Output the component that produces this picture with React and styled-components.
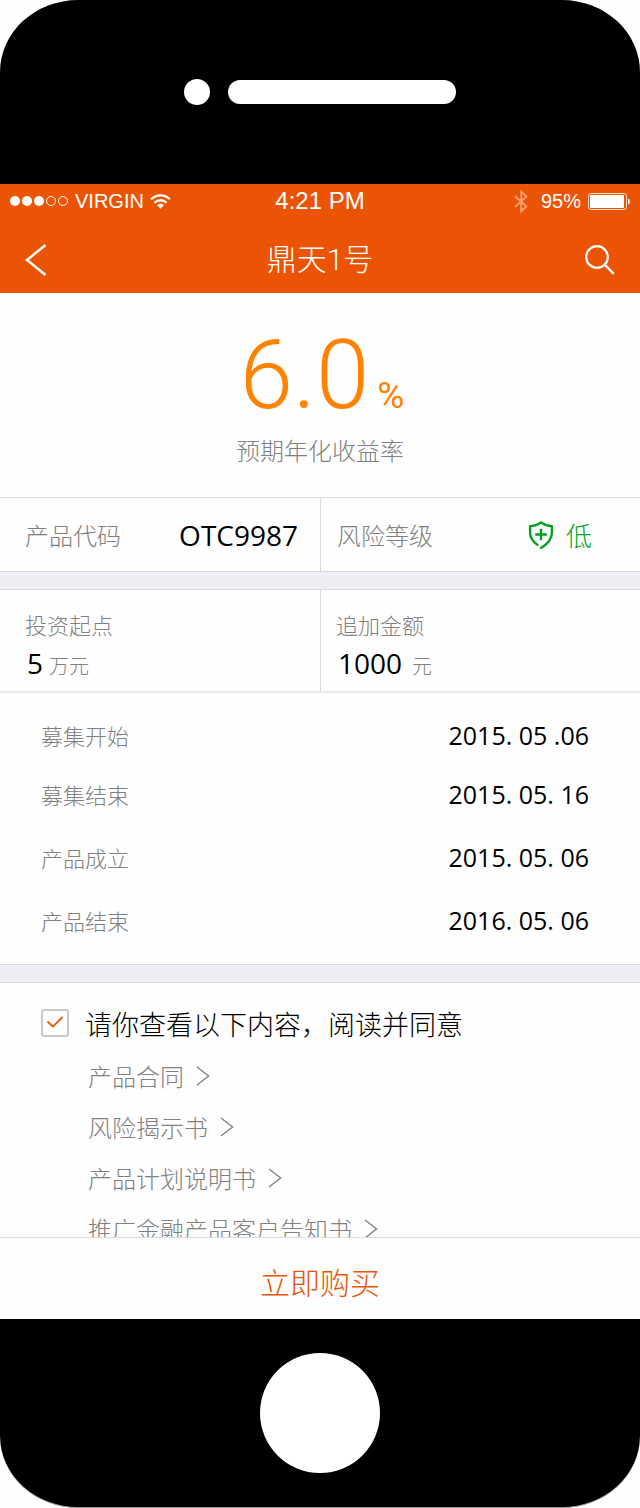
import { useState } from "react";
import styled, { createGlobalStyle } from "styled-components";

const dates = [
    { label: "募集开始", value: "2015. 05 .06" },
    { label: "募集结束", value: "2015. 05. 16" },
    { label: "产品成立", value: "2015. 05. 06" },
    { label: "产品结束", value: "2016. 05. 06" },
]

const documents = ["产品合同", "风险揭示书", "产品计划说明书", "推广金融产品客户告知书"]

const StatusBar = () => {
    return (
        <Status>
            <StatusSide>
                <svg width="59" height="12" viewBox="0 0 59 12" aria-hidden="true">
                    <g fill="#fff">
                        <circle cx="5" cy="6" r="5" />
                        <circle cx="17" cy="6" r="5" />
                        <circle cx="29" cy="6" r="5" />
                    </g>
                    <g fill="none" stroke="#fff" strokeWidth="1">
                        <circle cx="41" cy="6" r="4.5" />
                        <circle cx="53" cy="6" r="4.5" />
                    </g>
                </svg>
                <span>VIRGIN</span>
                <svg width="21" height="17" viewBox="0 0 22 17" aria-hidden="true">
                    <g fill="none" stroke="#fff" strokeWidth="2.4">
                        <path d="M1.2 6.2C6.6 0.6 15.4 0.6 20.8 6.2" />
                        <path d="M4.6 9.8C8.2 6.3 13.8 6.3 17.4 9.8" />
                    </g>
                    <path d="M7.4 12.4C9.4 10.5 12.6 10.5 14.6 12.4L11 16.2Z" fill="#fff" />
                </svg>
            </StatusSide>
            <Clock>4:21 PM</Clock>
            <StatusSide $end>
                <svg width="14" height="23" viewBox="0 0 14 23" aria-hidden="true">
                    <path
                        d="M1 6.2L12.4 16.2L7.2 21.4V1.6L12.4 6.6L1 16.8"
                        fill="none"
                        stroke="#fff"
                        strokeWidth="1.8"
                        opacity="0.45"
                    />
                </svg>
                <Battery>95%</Battery>
                <svg width="42" height="17" viewBox="0 0 42 17" aria-hidden="true">
                    <rect x="0.5" y="0.5" width="38" height="16" rx="2.5" fill="none" stroke="#fff" opacity="0.8" />
                    <rect x="2" y="2" width="34" height="13" rx="1" fill="#fff" />
                    <path d="M40 5.5C42.4 6.2 42.4 10.8 40 11.5Z" fill="#fff" />
                </svg>
            </StatusSide>
        </Status>
    )
}

const App = () => {
    const [agreed, setAgreed] = useState(true)

    return (
        <>
            <GlobalStyle />
            <Phone>
                <TopBezel>
                    <Camera />
                    <Speaker />
                </TopBezel>

                <Header>
                    <StatusBar />
                    <Nav>
                        <IconButton type="button" aria-label="返回">
                            <svg width="22" height="34" viewBox="0 0 22 34">
                                <path d="M20.5 2L2 17L20.5 32" fill="none" stroke="#fff" strokeWidth="2.4" />
                            </svg>
                        </IconButton>
                        <Title>鼎天1号</Title>
                        <IconButton type="button" aria-label="搜索">
                            <svg width="30" height="30" viewBox="0 0 30 30">
                                <circle cx="12" cy="12" r="10.8" fill="none" stroke="#fff" strokeWidth="2.2" />
                                <path d="M19.5 19.5L28.8 28.8" stroke="#fff" strokeWidth="2.4" />
                            </svg>
                        </IconButton>
                    </Nav>
                </Header>

                <main>
                    <Rate>
                        <RateValue>6.0<RateUnit>%</RateUnit></RateValue>
                        <RateLabel>预期年化收益率</RateLabel>
                    </Rate>

                    <Columns>
                        <InfoCell>
                            <InfoLabel>产品代码</InfoLabel>
                            <Value>OTC9987</Value>
                        </InfoCell>
                        <InfoCell $last>
                            <InfoLabel>风险等级</InfoLabel>
                            <Risk>
                                <svg width="26" height="30" viewBox="0 0 26 30" aria-hidden="true">
                                    <g fill="none" stroke="#00a321" strokeWidth="2.4">
                                        <path d="M10.2 25.4C5 21.8 2.1 18 2.1 13V6.3C6 6.1 9.8 4.8 13 2.4C16.2 4.8 20 6.1 23.9 6.3V13C23.9 20 18.6 24.7 12.2 28.6" />
                                        <path d="M13 8.8V20.2M7.2 14.5H18.8" />
                                    </g>
                                </svg>
                                低
                            </Risk>
                        </InfoCell>
                    </Columns>

                    <Divider />

                    <Columns>
                        <AmountCell>
                            <AmountLabel>投资起点</AmountLabel>
                            <Amount>5<Unit>万元</Unit></Amount>
                        </AmountCell>
                        <AmountCell $last>
                            <AmountLabel>追加金额</AmountLabel>
                            <Amount>1000<Unit $wide>元</Unit></Amount>
                        </AmountCell>
                    </Columns>

                    <DateList>
                        {dates.map((item) => (
                            <DateRow key={item.label}>
                                <DateLabel>{item.label}</DateLabel>
                                <DateValue>{item.value}</DateValue>
                            </DateRow>
                        ))}
                    </DateList>

                    <Divider />

                    <Agreement>
                        <AgreeLabel>
                            <CheckWrap>
                                <Checkbox
                                    type="checkbox"
                                    checked={agreed}
                                    onChange={(e) => setAgreed(e.target.checked)}
                                />
                                {agreed && (
                                    <CheckMark width="28" height="28" viewBox="0 0 28 28" aria-hidden="true">
                                        <path d="M6.5 12.5L12 17.6L21.4 8" fill="none" stroke="#ea5404" strokeWidth="1.8" />
                                    </CheckMark>
                                )}
                            </CheckWrap>
                            请你查看以下内容，阅读并同意
                        </AgreeLabel>
                        <DocList>
                            {documents.map((name) => (
                                <li key={name}>
                                    <DocLink href="#">
                                        {name}
                                        <svg width="14" height="20" viewBox="0 0 14 20" aria-hidden="true">
                                            <path d="M1 1L12.6 10L1 19" fill="none" stroke="#808080" strokeWidth="1.4" />
                                        </svg>
                                    </DocLink>
                                </li>
                            ))}
                        </DocList>
                    </Agreement>
                </main>

                <BuyButton type="button">立即购买</BuyButton>

                <BottomBezel>
                    <HomeButton type="button" aria-label="主屏幕" />
                </BottomBezel>
            </Phone>
        </>
    )
}
export default App;

const GlobalStyle = createGlobalStyle`
    *, *::before, *::after {
        box-sizing: border-box;
    }
    body {
        margin: 0;
        background-color: #fff;
        font-family: "Open Sans", "Noto Sans CJK SC", sans-serif;
        color: #000;
    }
    button {
        padding: 0;
        border: none;
        background: none;
        cursor: pointer;
    }
    dl, dd, ul, h1, p {
        margin: 0;
        padding: 0;
    }
`

const Phone = styled.div`
    display: flex;
    flex-direction: column;
    background-color: #fefefe;
`

const TopBezel = styled.div`
    display: flex;
    justify-content: center;
    align-items: center;
    gap: 18px;
    height: 184px;
    background-color: #000;
    border-radius: 78px 78px 0 0 / 72px 72px 0 0;
`

const Camera = styled.span`
    width: 26px;
    height: 26px;
    border-radius: 50%;
    background-color: #fff;
`

const Speaker = styled.span`
    width: 228px;
    height: 24px;
    border-radius: 12px;
    background-color: #fff;
`

const Header = styled.header`
    background-color: #ea5404;
    color: #fff;
`

const Status = styled.div`
    display: grid;
    grid-template-columns: 1fr auto 1fr;
    align-items: center;
    height: 34px;
    padding: 0 10px;
    font-family: "Liberation Sans", sans-serif;
    font-size: 20px;
`

const StatusSide = styled.div`
    display: flex;
    align-items: center;
    justify-content: ${(props) => (props.$end ? "flex-end" : "flex-start")};
    gap: 6px;
`

const Clock = styled.span`
    font-size: 24px;
`

const Battery = styled.span`
    margin: 0 1px 0 7px;
`

const Nav = styled.nav`
    display: flex;
    justify-content: space-between;
    align-items: center;
    height: 75px;
    padding: 9px 25px 0;
`

const IconButton = styled.button`
    display: flex;
    align-items: center;
    min-width: 30px;
`

const Title = styled.h1`
    font-family: Roboto, "Noto Sans CJK SC", sans-serif;
    font-size: 30px;
    font-weight: 300;
    line-height: 40px;
`

const Rate = styled.section`
    display: flex;
    flex-direction: column;
    align-items: center;
    padding: 32px 0 28px;
    border-bottom: 1px solid #d9d9dc;
`

const RateValue = styled.p`
    padding-left: 4px;
    color: #ff8200;
    font-family: Roboto, sans-serif;
    font-size: 96px;
    font-weight: 300;
    line-height: 100px;
`

const RateUnit = styled.span`
    margin-left: 8px;
    font-size: 37px;
    font-weight: 400;
    line-height: 1;
`

const RateLabel = styled.p`
    margin-top: 8px;
    color: #808080;
    font-size: 24px;
    font-weight: 300;
    line-height: 36px;
`

const Columns = styled.dl`
    display: grid;
    grid-template-columns: 1fr 1fr;
`

const InfoCell = styled.div`
    display: flex;
    justify-content: space-between;
    align-items: center;
    height: 73px;
    padding: ${(props) => (props.$last ? "0 48px 0 16px" : "0 22px 0 25px")};
    border-left: ${(props) => (props.$last ? "1px solid #d9d9dc" : "none")};
`

const InfoLabel = styled.dt`
    color: #808080;
    font-size: 24px;
    font-weight: 300;
`

const Value = styled.dd`
    font-size: 28px;
`

const Risk = styled.dd`
    display: flex;
    align-items: center;
    gap: 12px;
    color: #00a321;
    font-size: 26px;
    font-weight: 300;
`

const Divider = styled.div`
    height: 19px;
    border-top: 1px solid #d9d9dc;
    border-bottom: 1px solid #d9d9dc;
    background-color: #efeef5;
`

const AmountCell = styled.div`
    padding: ${(props) => (props.$last ? "18px 16px 6px 15px" : "18px 16px 6px 25px")};
    border-left: ${(props) => (props.$last ? "1px solid #d9d9dc" : "none")};
`

const AmountLabel = styled.dt`
    color: #808080;
    font-size: 22px;
    font-weight: 300;
    line-height: 34px;
`

const Amount = styled.dd`
    padding-left: 2px;
    font-size: 28px;
    line-height: 43px;
`

const Unit = styled.span`
    margin-left: ${(props) => (props.$wide ? "10px" : "6px")};
    color: #808080;
    font-size: 20px;
    font-weight: 300;
    line-height: 1;
`

const DateList = styled.dl`
    padding: 15px 51px 13px 41px;
    border-top: 2px solid #e8e8ea;
`

const DateRow = styled.div`
    display: flex;
    justify-content: space-between;
    align-items: center;
    height: 63px;

    &:first-child {
        height: 54px;
    }
`

const DateLabel = styled.dt`
    color: #808080;
    font-size: 22px;
    font-weight: 300;
`

const DateValue = styled.dd`
    font-size: 25px;
`

const Agreement = styled.section`
    height: 254px;
    padding: 19px 41px 0;
    overflow-y: auto;
    scrollbar-width: none;
`

const AgreeLabel = styled.label`
    display: flex;
    align-items: center;
    gap: 16px;
    height: 42px;
    font-size: 27px;
    font-weight: 300;
    cursor: pointer;
`

const CheckWrap = styled.span`
    position: relative;
    display: flex;
`

const Checkbox = styled.input`
    appearance: none;
    width: 28px;
    height: 28px;
    margin: 0;
    border: 2px solid #c9c9cd;
    border-radius: 3px;
`

const CheckMark = styled.svg`
    position: absolute;
    inset: 0;
    pointer-events: none;
`

const DocList = styled.ul`
    padding: 6px 0 0 47px;
    list-style: none;
`

const DocLink = styled.a`
    display: flex;
    align-items: center;
    gap: 12px;
    height: 51px;
    color: #808080;
    font-size: 24px;
    font-weight: 300;
    text-decoration: none;
`

const BuyButton = styled.button`
    height: 82px;
    padding-top: 4px;
    border-top: 1px solid #dcdcdf;
    color: #ea5404;
    font-family: "Noto Sans CJK SC", sans-serif;
    font-size: 30px;
    font-weight: 300;
`

const BottomBezel = styled.div`
    display: flex;
    justify-content: center;
    align-items: center;
    height: 189px;
    border-bottom: 1px solid #999;
    border-radius: 0 0 78px 78px / 0 0 72px 72px;
    background-color: #000;
`

const HomeButton = styled.button`
    width: 120px;
    height: 120px;
    border-radius: 50%;
    background-color: #fff;
`
